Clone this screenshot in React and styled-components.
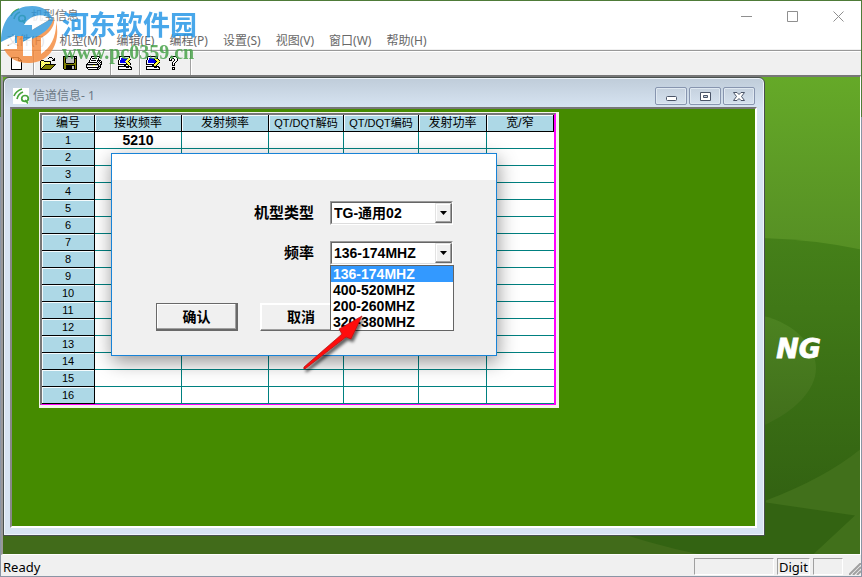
import React from 'react';
import styled, { createGlobalStyle, css } from 'styled-components';

const Global = createGlobalStyle`
  * { box-sizing: border-box; }
  body { margin: 0; overflow: hidden; font: 12px/16px "Noto Sans", "Noto Sans CJK SC", sans-serif; color: #000; }
  button, select { font: inherit; color: inherit; margin: 0; padding: 0; }
`;

const Desktop = styled.div`
  display: flex;
  min-height: 100vh;
  padding: 1px;
  background: linear-gradient(#4e7b38 117px, #8a95a5 117px);
`;

const AppWindow = styled.div`
  position: relative;
  flex: 1;
  min-width: 0;
  display: flex;
  flex-direction: column;
  background: #f0f0f0;
`;

const TitleBar = styled.header`
  display: flex;
  align-items: center;
  height: 30px;
  padding: 0 2px 0 9px;
  gap: 4px;
  background: #fff;
  color: #777;
`;

const Grow = styled.span`
  flex: 1;
`;

const CaptionButton = styled.button`
  display: grid;
  place-items: center;
  width: 42px;
  height: 28px;
  border: 0;
  background: none;
  color: #8f8f8f;
`;

const MenuBar = styled.nav`
  display: flex;
  align-items: center;
  gap: 15px;
  height: 18px;
  padding: 2px 6px 0;
  background: #fff;
`;

const MenuItem = styled.button`
  border: 0;
  background: none;
  color: #686868;
  white-space: nowrap;
`;

const ToolBar = styled.div`
  display: flex;
  align-items: center;
  height: 25px;
  margin-top: 1px;
  border-top: 1px solid #999;
  box-shadow: inset 0 1px #fff;
`;

const ToolGroup = styled.div`
  display: flex;
  align-items: center;
  height: 24px;
  padding: 0 4px;
  border-right: 1px solid #a0a0a0;
  box-shadow: 1px 0 #fff;
`;

const ToolButton = styled.button`
  display: grid;
  place-items: center;
  width: ${(p) => p.$width || 23}px;
  height: 22px;
  border: 0;
  background: none;
`;

const Workspace = styled.main`
  position: relative;
  flex: 1;
  display: flex;
  border: solid;
  border-width: 2px 1px 1px 2px;
  border-color: #777 #fff #fff #999;
  background: #416b1a;
`;

const Backdrop = styled.svg`
  position: absolute;
  inset: 0;
  width: 100%;
  height: 100%;
`;

const ChildWindow = styled.section`
  position: relative;
  flex: 1;
  display: flex;
  flex-direction: column;
  margin: 0 95px 18px 0;
  padding: 0 7px 7px 6px;
  border: 1px solid #48504e;
  border-radius: 6px 6px 0 0;
  background: linear-gradient(#bfccd9, #d7e4f2 30px);
  box-shadow: inset 0 0 0 1px #eef4fa;
`;

const ChildTitle = styled.header`
  display: flex;
  align-items: center;
  gap: 2px;
  height: 29px;
  padding: 7px 2px 0 3px;
  color: #6b7784;
`;

const ChildName = styled.span`
  padding-left: 1px;
`;

const ChildButton = styled.button`
  display: grid;
  place-items: center;
  width: 32px;
  height: 18px;
  border: 1px solid #8795af;
  border-radius: 2px;
  background: linear-gradient(#c5d1de, #d5e1ee);
  box-shadow: inset 0 0 0 1px #dfe8f1;
`;

const Sheet = styled.div`
  position: relative;
  flex: 1;
  padding: 3px 27px;
  border: 2px solid;
  border-color: #777 #fff #fff #888;
  background: #458b00;
`;

const GridFrame = styled.div`
  width: max-content;
  border: 1px solid #f4f4ea;
  border-right-width: 3px;
  border-bottom-width: 3px;
`;

const GridTable = styled.table`
  table-layout: fixed;
  border-collapse: separate;
  border-spacing: 0;
  width: 516px;
  border: 2px solid #777;
  border-right: 2px solid #f0f;
  border-bottom: 1px solid #f0f;
  background: #fff;
  text-align: center;
`;

const heading = css`
  background: #add8e6;
  box-shadow: inset 1px 1px #f4fbfd;
  border-color: #000;
  font-weight: 400;
`;

const Cell = styled.td`
  height: 17px;
  padding: 0;
  border: 0 solid #008080;
  border-bottom-width: 1px;
  border-right-width: ${(p) => (p.$last ? 0 : 1)}px;
  font: bold 14px/16px "Liberation Sans", sans-serif;
`;

const HeadCell = styled(Cell)`
  ${heading}
  width: ${(p) => p.$width}px;
  border-right-width: 1px;
  font: ${(p) => (p.$small ? 11 : 12)}px/15px "Liberation Sans", "Noto Sans CJK SC", sans-serif;
  white-space: nowrap;
`;

const RowHead = styled(Cell)`
  ${heading}
  font: 11px/15px "Liberation Sans", sans-serif;
`;

const Dialog = styled.div`
  position: absolute;
  top: 44px;
  left: 99px;
  border: 1px solid #1883d7;
  background: #f0f0f0;
  box-shadow: 1px 6px 18px rgba(0, 0, 0, 0.42);
  font: bold 14px/16px "Liberation Sans", "Noto Sans CJK SC", sans-serif;
`;

const DialogTitle = styled.div`
  height: 26px;
  background: #fff;
`;

const Form = styled.form`
  padding: 21px 43px 24px 44px;
`;

const Fields = styled.div`
  display: grid;
  grid-template-columns: 158px 123px;
  gap: 16px;
  align-items: center;
`;

const Label = styled.label`
  text-align: right;
  font-size: 15px;
`;

const Combo = styled.div`
  position: relative;
  display: flex;
  height: 24px;
  border: 1px solid;
  border-color: #999 #fff #fff #999;
`;

const Select = styled.select`
  flex: 1;
  min-width: 0;
  appearance: none;
  padding: 0 20px 0 2px;
  border: 1px solid;
  border-color: #666 #ddd #ddd #666;
  border-radius: 0;
  outline: 0;
  background: #fff;
`;

const ComboArrow = styled.span`
  position: absolute;
  top: 1px;
  right: 0;
  bottom: 1px;
  width: 17px;
  display: grid;
  place-items: center;
  border: 1px solid;
  border-color: #e3e3e3 #696969 #696969 #e3e3e3;
  box-shadow: inset -1px -1px #a0a0a0, inset 1px 1px #fff;
  background: #f0f0f0;
  pointer-events: none;
`;

const OptionList = styled.ul`
  position: absolute;
  z-index: 1;
  top: 23px;
  left: -1px;
  width: 124px;
  margin: 0;
  padding: 0;
  border: 1px solid #646464;
  background: #fff;
  list-style: none;
`;

const Option = styled.li`
  padding-left: 2px;
  color: ${(p) => (p.$active ? '#fff' : '#000')};
  background: ${(p) => (p.$active ? '#3399ff' : '#fff')};
`;

const Actions = styled.div`
  display: flex;
  gap: 22px;
  margin-top: 38px;
`;

const PushButton = styled.button`
  width: 82px;
  height: 28px;
  border: 1px solid;
  border-color: ${(p) => (p.$primary ? '#696969' : '#fff #696969 #696969 #fff')};
  border-right-width: ${(p) => (p.$primary ? 2 : 1)}px;
  border-bottom-width: ${(p) => (p.$primary ? 2 : 1)}px;
  background: #f0f0f0;
  box-shadow: inset -1px -1px #a0a0a0, inset 1px 1px #fff;
`;

const Pointer = styled.svg`
  position: absolute;
  z-index: 2;
  left: 185px;
  top: 156px;
  pointer-events: none;
`;

const StatusBar = styled.footer`
  display: flex;
  align-items: flex-end;
  gap: 3px;
  height: 21px;
  padding: 3px 0 1px 2px;
  font-size: 13px;
`;

const StatusField = styled.span`
  width: ${(p) => p.$width}px;
  height: 17px;
  padding-left: 1px;
  border: 1px solid;
  border-color: #a0a0a0 #fff #fff #a0a0a0;
`;

const SizeGrip = styled.svg`
  margin-left: 3px;
`;

const Watermark = styled.div`
  position: absolute;
  top: 5px;
  left: 0;
  display: flex;
  opacity: 0.82;
  pointer-events: none;
`;

const WatermarkText = styled.div`
  padding-left: 2px;
`;

const SiteName = styled.div`
  color: #2094e6;
  font: bold 27px/36px "Noto Sans CJK SC", sans-serif;
`;

const SiteAddress = styled.div`
  color: #43a044;
  font: bold 20px/20px "Liberation Serif", serif;
`;

const INK = { k: '#000', w: '#fff', y: '#ffff38', p: '#f5f5a0', o: '#808000', b: '#0000f0', g: '#c0c0c0', d: '#808080' };

function PixelIcon({ rows }) {
  return (
    <svg width={rows[0].length} height={rows.length} shapeRendering="crispEdges" aria-hidden="true">
      {rows.flatMap((row, y) =>
        [...row].map((c, x) => (INK[c] ? <rect key={x + '-' + y} x={x} y={y} width="1" height="1" fill={INK[c]} /> : null)),
      )}
    </svg>
  );
}

const ICONS = {
  fresh: [
    'kkkkkkkk....', 'kwwwwwwkk...', 'kwwwwwwkwk..', 'kwwwwwwkkkk.', 'kwwwwwwwwwk.', 'kwwwwwwwwwk.', 'kwwwwwwwwwk.',
    'kwwwwwwwwwk.', 'kwwwwwwwwwk.', 'kwwwwwwwwwk.', 'kwwwwwwwwwk.', 'kwwwwwwwwwk.', 'kkkkkkkkkkk.',
  ],
  open: [
    '.........kkk....', '........k...k.k.', '.............kk.', '.kkk........kkk.', 'kpypkkkkkkk.....', 'kypypypypyk.....',
    'kpypypypypk.....', 'kypypkkkkkkkkkkk', 'kpypkoooooooook.', 'kypkoooooooook..', 'kpkoooooooook...', 'kkoooooooook....',
    'kkkkkkkkkkk.....',
  ],
  save: [
    'kkkkkkkkkkkkkk', 'kokggggggggkgk', 'kokggggggggkkk', 'kokggggggggkok', 'kokggggggggkok', 'kokggggggggkok',
    'kokggggggggkok', 'kookkkkkkkkook', 'kooooooooooook', 'kookkkkkkkkkok', 'kookkkkkkggkok', 'kookkkkkkggkok',
    'kookkkkkkggkok', '.kkkkkkkkkkkkk',
  ],
  print: [
    '.....kkkkkkkkk..', '.....kwwwwwwwk..', '....kwkkkkkwk...', '....kwwwwwwwk...', '...kwkkkkkwkkkk.', '...kwwwwwwwk.k.k',
    '..kkkkkkkkk.k.kk', '.k.........k.k.k', 'kkkkkkkkkkkkk.kk', 'kggggggyygggkgk.', 'kwwwwwwwwwwwkkk.', 'kkkkkkkkkkkkkgk.',
    '.kwwwwwwwwwkgk..', '..kkkkkkkkkkk...',
  ],
  read: [
    '.kkkkkkkkkkk..', '.kwwwwwwwwwk..', '.kwbbbbbbbyy..', '.kwbbbbbbyyyk.', 'kwbbbbbbyyyk..', 'kwbbbbbyyyk...',
    'kwbbbbbbyyyk..', 'kwwwwwwwkyyyk.', 'kkkkkkkkkkyyk.', '..wwwwkkwwk...', 'kkkkkkkkkkkkk.', 'kwwwwwwwkkkwkk', 'kwwwwwwwwwwwwk',
    'kkkkkkkkkkkkkk',
  ],
  write: [
    '.kkkkkkkkkkk..', '.kwwwwwwwwwk..', '.kwbbbbbyybk..', '.kwbbbbbkyyyk.', 'kwbbbbbbbkyyyk', 'kwbbbbbbbbkyyy',
    'kwbbbbbbbkyyyk', 'kwwwwwwwkyyyk.', 'kkkkkkkkyyyk..', '..wwwwkkyyk...', 'kkkkkkkkkkkkk.', 'kwwwwwwwkkkwkk', 'kwwwwwwwwwwwwk',
    'kkkkkkkkkkkkkk',
  ],
  help: [
    '..kkkkk...', '.kwwwwwk..', 'kwwkkwwwk.', 'kwk..kwwk.', 'kkk..kwwk.', '....kwwk..', '...kwwk...',
    '...kwk....', '...kwk....', '...kkk....', '..........', '...kkk....', '...kwk....', '...kkk....',
  ],
};

function SignalIcon() {
  return (
    <svg width="17" height="17" viewBox="0 0 17 17" fill="none" stroke="#48a53c" strokeWidth="1.7" aria-hidden="true">
      <rect width="16" height="16" fill="#fff" stroke="none" />
      <path d="M1 8Q3 3 9 1M4 11Q5 6 10 4" />
      <ellipse cx="12" cy="10.5" rx="3.3" ry="3" />
      <path d="M12 12L15 15.5" />
    </svg>
  );
}

function SiteLogo() {
  return (
    <svg width="59" height="60" viewBox="0 0 59 60" aria-hidden="true">
      <path d="M28 6C42 5 51 14 51 28C51 42 41 51 27 51C13 51 6 42 6 30C7 17 15 8 28 6Z" fill="#fff" />
      <path d="M0 36C0 13 13 0 31 0C42 0 50 6 52 14C42 6 29 8 23 19H31V31L20 37H14V29Z" fill="#3099dc" />
      <path d="M55 15C60 36 50 56 29 57C17 58 7 52 3 43H16V30H22V50H31V24L53 11C55 20 48 28 40 32V48C50 42 56 29 55 15Z" fill="#f58a3c" />
      <path d="M31 24L53 11C51 20 45 27 31 33Z" fill="#3099dc" />
    </svg>
  );
}

function Scenery() {
  return (
    <Backdrop viewBox="0 0 856 478" preserveAspectRatio="xMaxYMin slice" aria-hidden="true">
      <defs>
        <linearGradient id="sky" x1="0" y1="0" x2="0" y2="1">
          <stop offset="0" stopColor="#65a928" />
          <stop offset="0.36" stopColor="#568f24" />
        </linearGradient>
        <linearGradient id="hill" x1="0" y1="0" x2="0" y2="1">
          <stop offset="0" stopColor="#458019" />
          <stop offset="0.8" stopColor="#336312" />
        </linearGradient>
        <linearGradient id="disc" x1="0" y1="0" x2="0" y2="1">
          <stop offset="0" stopColor="#4c8321" />
          <stop offset="1" stopColor="#416f1b" />
        </linearGradient>
      </defs>
      <rect width="856" height="478" fill="url(#sky)" />
      <path d="M600 174Q740 148 856 172V478H600Z" fill="url(#hill)" />
      <path d="M740 236C785 238 812 266 812 291C812 313 790 334 762 347H740Z" fill="url(#disc)" />
      <path d="M762 423Q822 400 856 372V478H808L851 438L762 425Z" fill="#41701b" />
      <path d="M0 450H600Q650 468 702 478H0Z" fill="#416b1a" />
      <text
        x="817" y="281" textAnchor="end" fill="#fff" stroke="#fff" strokeWidth="0.8"
        fontFamily="DejaVu Sans" fontWeight="700" fontStyle="italic" fontSize="27"
      >
        NG
      </text>
    </Backdrop>
  );
}

const MENUS = ['文件(F)', '机型(M)', '编辑(E)', '编程(P)', '设置(S)', '视图(V)', '窗口(W)', '帮助(H)'];

const COLUMNS = [
  ['编号', 53], ['接收频率', 87], ['发射频率', 87], ['QT/DQT解码', 75], ['QT/DQT编码', 75], ['发射功率', 68], ['宽/窄', 67],
];

const BANDS = ['136-174MHZ', '400-520MHZ', '200-260MHZ', '320-380MHZ'];

function DownArrow() {
  return (
    <ComboArrow>
      <svg width="7" height="4" aria-hidden="true"><path d="M0 0H7L3.5 4Z" /></svg>
    </ComboArrow>
  );
}

function ChannelTable() {
  return (
    <GridFrame>
      <GridTable>
        <thead>
          <tr>
            {COLUMNS.map(([name, width]) => (
              <HeadCell as="th" scope="col" key={name} $width={width} $small={name.startsWith('QT')}>{name}</HeadCell>
            ))}
          </tr>
        </thead>
        <tbody>
          {Array.from({ length: 16 }, (_, r) => (
            <tr key={r}>
              <RowHead as="th" scope="row">{r + 1}</RowHead>
              {COLUMNS.slice(1).map(([name], c) => <Cell key={name} $last={c === 5}>{r === 0 && c === 0 ? '5210' : ''}</Cell>)}
            </tr>
          ))}
        </tbody>
      </GridTable>
    </GridFrame>
  );
}

function ModelDialog() {
  return (
    <Dialog role="dialog" aria-label="机型信息">
      <DialogTitle />
      <Form onSubmit={(e) => e.preventDefault()}>
        <Fields>
          <Label htmlFor="model">机型类型</Label>
          <Combo>
            <Select id="model"><option>TG-通用02</option></Select>
            <DownArrow />
          </Combo>
          <Label htmlFor="band">频率</Label>
          <Combo>
            <Select id="band">{BANDS.map((b) => <option key={b}>{b}</option>)}</Select>
            <DownArrow />
            <OptionList role="listbox" aria-label="频率">
              {BANDS.map((b, i) => <Option key={b} role="option" aria-selected={i === 0} $active={i === 0}>{b}</Option>)}
            </OptionList>
          </Combo>
        </Fields>
        <Actions>
          <PushButton type="submit" $primary>确认</PushButton>
          <PushButton type="button">取消</PushButton>
        </Actions>
      </Form>
      <Pointer width="75" height="70" aria-hidden="true">
        <defs>
          <filter id="soft" x="-20%" y="-20%" width="150%" height="150%">
            <feDropShadow dx="2" dy="3" stdDeviation="1.5" floodOpacity="0.6" />
          </filter>
        </defs>
        <path d="M7 57L45 24L42 19L65 6L54 29L49 27L8 59Q6 59 7 57Z" fill="#ff0a0a" stroke="#a81010" strokeWidth="0.7" filter="url(#soft)" />
      </Pointer>
    </Dialog>
  );
}

export default function App() {
  return (
    <Desktop>
      <Global />
      <AppWindow>
        <TitleBar>
          <SignalIcon />
          <span>机型信息</span>
          <Grow />
          <CaptionButton aria-label="最小化"><svg width="11" height="11"><path d="M0 5.5H11" stroke="currentColor" /></svg></CaptionButton>
          <CaptionButton aria-label="最大化"><svg width="11" height="11"><path d="M.5.5H10.5V10.5H.5Z" fill="none" stroke="currentColor" /></svg></CaptionButton>
          <CaptionButton aria-label="关闭"><svg width="11" height="11"><path d="M.5.5L10.5 10.5M10.5.5L.5 10.5" stroke="currentColor" /></svg></CaptionButton>
        </TitleBar>
        <MenuBar>{MENUS.map((m) => <MenuItem key={m}>{m}</MenuItem>)}</MenuBar>
        <ToolBar>
          <ToolGroup>
            <ToolButton $width={24} aria-label="新建"><PixelIcon rows={ICONS.fresh} /></ToolButton>
          </ToolGroup>
          <ToolGroup>
            <ToolButton $width={20} aria-label="打开"><PixelIcon rows={ICONS.open} /></ToolButton>
            <ToolButton $width={24} aria-label="保存"><PixelIcon rows={ICONS.save} /></ToolButton>
            <ToolButton $width={24} aria-label="打印"><PixelIcon rows={ICONS.print} /></ToolButton>
          </ToolGroup>
          <ToolGroup>
            <ToolButton $width={20} aria-label="读取"><PixelIcon rows={ICONS.read} /></ToolButton>
          </ToolGroup>
          <ToolGroup>
            <ToolButton $width={18} aria-label="写入"><PixelIcon rows={ICONS.write} /></ToolButton>
            <ToolButton $width={24} aria-label="帮助"><PixelIcon rows={ICONS.help} /></ToolButton>
          </ToolGroup>
        </ToolBar>
        <Workspace>
          <Scenery />
          <ChildWindow>
            <ChildTitle>
              <SignalIcon />
              <ChildName>信道信息- 1</ChildName>
              <Grow />
              <ChildButton aria-label="最小化信道信息">
                <svg width="11" height="9"><rect x=".5" y="4.5" width="10" height="4" rx="1" fill="#fff" stroke="#4b5568" /></svg>
              </ChildButton>
              <ChildButton aria-label="最大化信道信息">
                <svg width="11" height="9"><path d="M.5.5H10.5V8.5H.5Z" fill="#fff" stroke="#4b5568" /><path d="M3.5 3.5H7.5V5.5H3.5Z" fill="#c5d1de" stroke="#4b5568" /></svg>
              </ChildButton>
              <ChildButton aria-label="关闭信道信息">
                <svg width="12" height="9"><path d="M.5.5H4L6 2.5L8 .5H11.5L8.5 4.5L11.5 8.5H8L6 6.5L4 8.5H.5L3.5 4.5Z" fill="#fff" stroke="#4b5568" /></svg>
              </ChildButton>
            </ChildTitle>
            <Sheet>
              <ChannelTable />
              <ModelDialog />
            </Sheet>
          </ChildWindow>
        </Workspace>
        <StatusBar>
          <span>Ready</span>
          <Grow />
          <StatusField $width={80} />
          <StatusField $width={33}>Digit</StatusField>
          <StatusField $width={30} />
          <SizeGrip width="12" height="12" aria-hidden="true">
            <path d="M0 12L12 0M4 12L12 4M8 12L12 8" stroke="#a0a0a0" strokeWidth="2" />
          </SizeGrip>
        </StatusBar>
        <Watermark>
          <SiteLogo />
          <WatermarkText>
            <SiteName>河东软件园</SiteName>
            <SiteAddress>www.pc0359.cn</SiteAddress>
          </WatermarkText>
        </Watermark>
      </AppWindow>
    </Desktop>
  );
}
